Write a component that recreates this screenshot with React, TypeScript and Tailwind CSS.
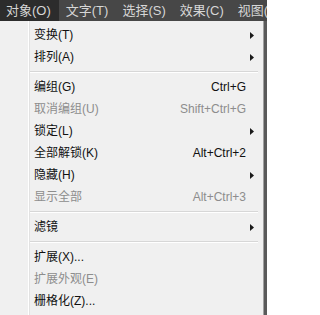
import React from 'react';

type Item =
    | { kind: 'sep' }
    | { kind: 'item'; label: string; shortcut?: string; submenu?: boolean; disabled?: boolean };

const MENU_BAR = ['对象(O)', '文字(T)', '选择(S)', '效果(C)', '视图(V)'];

const ITEMS: Item[] = [
    { kind: 'item', label: '变换(T)', submenu: true },
    { kind: 'item', label: '排列(A)', submenu: true },
    { kind: 'sep' },
    { kind: 'item', label: '编组(G)', shortcut: 'Ctrl+G' },
    { kind: 'item', label: '取消编组(U)', shortcut: 'Shift+Ctrl+G', disabled: true },
    { kind: 'item', label: '锁定(L)', submenu: true },
    { kind: 'item', label: '全部解锁(K)', shortcut: 'Alt+Ctrl+2' },
    { kind: 'item', label: '隐藏(H)', submenu: true },
    { kind: 'item', label: '显示全部', shortcut: 'Alt+Ctrl+3', disabled: true },
    { kind: 'sep' },
    { kind: 'item', label: '滤镜', submenu: true },
    { kind: 'sep' },
    { kind: 'item', label: '扩展(X)...' },
    { kind: 'item', label: '扩展外观(E)', disabled: true },
    { kind: 'item', label: '栅格化(Z)...' },
];

function Arrow() {
    return (
        <svg width="4" height="7" viewBox="0 0 4 7" className="block">
            <path d="M0 0 L4 3.5 L0 7 Z" fill="#1a1a1a" />
        </svg>
    );
}

function MenuRow({ item }: { item: Item }) {
    if (item.kind === 'sep') {
        return (
            <div className="h-[8px] flex flex-col justify-center pr-[5px]">
                <div className="h-px bg-[#d7d7d7]" />
                <div className="h-px bg-white" />
            </div>
        );
    }
    return (
        <div
            className={`h-[22px] flex items-center pl-[4px] ${item.disabled ? 'text-[#8d8d8d]' : 'text-[#111]'}`}
        >
            <span className="flex-1 whitespace-nowrap">{item.label}</span>
            {item.shortcut && <span className="whitespace-nowrap pr-[17px]">{item.shortcut}</span>}
            {item.submenu && (
                <span className="pr-[9px]">
                    <Arrow />
                </span>
            )}
        </div>
    );
}

export default function App() {
    return (
        <div
            className="w-[267px] h-[315px] overflow-hidden bg-[#5a5a5a] text-[12px] leading-none"
            style={{ fontFamily: '"Liberation Sans", "Noto Sans CJK SC", sans-serif' }}
        >
            {/* Menu bar */}
            <div className="h-[21px] bg-[#474747] flex items-stretch whitespace-nowrap overflow-hidden text-[13px]">
                {MENU_BAR.map((m, i) => (
                    <div
                        key={m}
                        className={`flex items-center shrink-0 ${i === 0 ? 'pl-[6px] pr-[8px] bg-[#2c2c2c]' : 'px-[7px]'} text-[#d6d6d6]`}
                    >
                        {m}
                    </div>
                ))}
            </div>

            {/* Dropdown */}
            <div className="w-[264px] h-[294px] bg-[#f0f0f0] border-r border-[#a0a0a0] flex">
                <div className="w-[30px] shrink-0 border-r border-[#e2e2e2]">
                    <div className="h-full w-[29px] border-r border-white" />
                </div>
                <div className="flex-1 pt-[3px]">
                    {ITEMS.map((item, i) => (
                        <MenuRow key={i} item={item} />
                    ))}
                </div>
            </div>
        </div>
    );
}
